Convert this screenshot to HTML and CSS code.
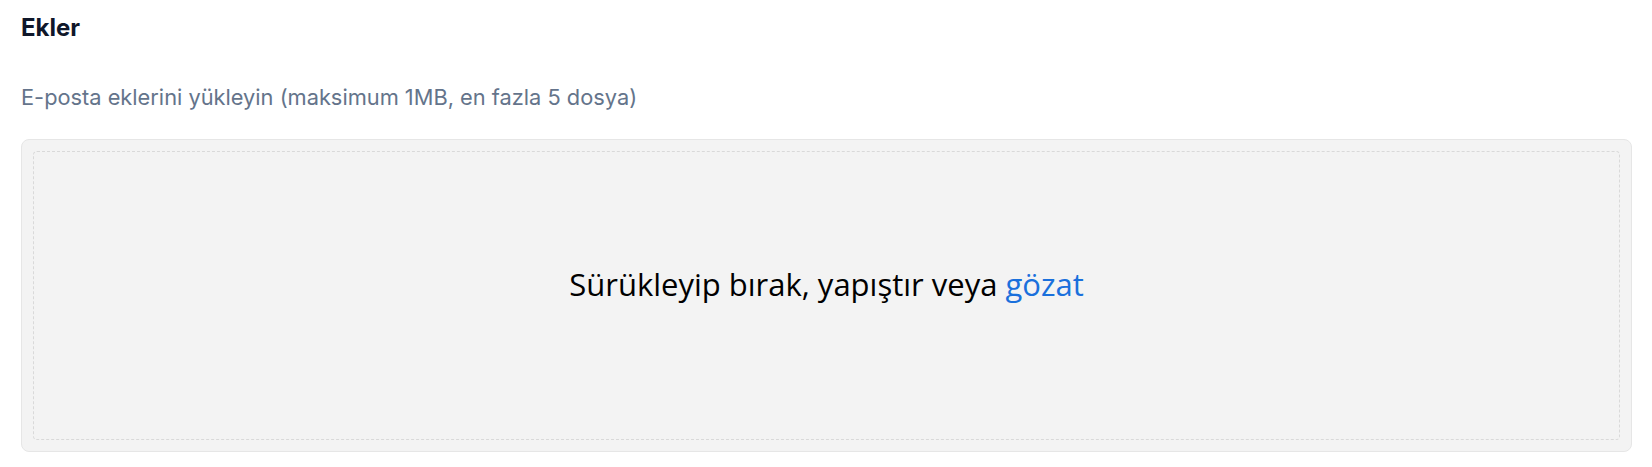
FILE: index.html
```html
<!DOCTYPE html>
<html lang="tr">
<head>
<meta charset="utf-8">
<title>Ekler</title>
<link rel="stylesheet" href="styles.css">
</head>
<body>
<section class="field">
  <h2 class="title">Ekler</h2>
  <p class="desc">E-posta eklerini yükleyin (maksimum 1MB, en fazla 5 dosya)</p>
  <div class="drop">
    <div class="drop-inner">
      <span class="drop-text">Sürükleyip bırak, yapıştır veya <a class="browse" href="#">gözat</a></span>
    </div>
  </div>
</section>
</body>
</html>
```
FILE: styles.css
```css
html, body {
  margin: 0;
  padding: 0;
  background: #ffffff;
}
body {
  font-family: Inter, "Liberation Sans", sans-serif;
}
.field {
  padding: 13px 20px 0 21px;
  display: flex;
  flex-direction: column;
}
.title {
  margin: 0;
  font-size: 24px;
  line-height: 30px;
  font-weight: 700;
  color: #0f172a;
}
.desc {
  margin: 39px 0 0 0;
  font-size: 21.8px;
  line-height: 30px;
  color: #64748b;
}
.drop {
  margin-top: 27px;
  height: 313px;
  box-sizing: border-box;
  background: #f3f3f3;
  border: 1px solid #e6e6e6;
  border-radius: 8px;
  padding: 11px;
  display: flex;
}
.drop-inner {
  flex: 1;
  border: 1px dashed #d9d9d9;
  border-radius: 4px;
  display: flex;
  align-items: center;
  justify-content: center;
}
.drop-text {
  font-family: "Open Sans", "Noto Sans", sans-serif;
  font-size: 31px;
  line-height: 42px;
  color: #000000;
  margin-top: -24px;
}
.browse {
  color: #1a70dc;
  text-decoration: none;
}
```
